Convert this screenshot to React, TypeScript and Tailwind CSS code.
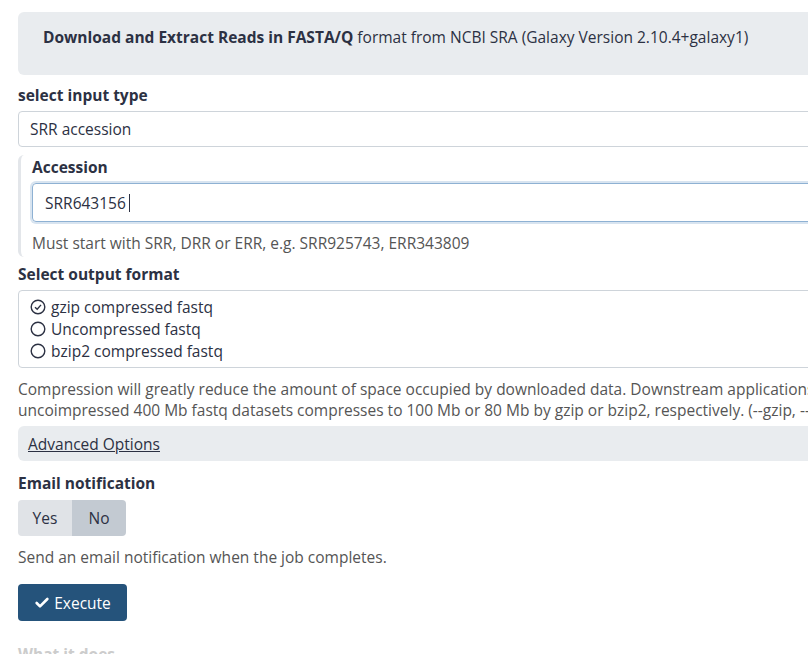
import { Check } from 'lucide-react';

const formats = [
  { label: 'gzip compressed fastq', checked: true },
  { label: 'Uncompressed fastq', checked: false },
  { label: 'bzip2 compressed fastq', checked: false },
];

function RadioIcon({ checked }: { checked: boolean }) {
  return (
    <svg width="16" height="16" viewBox="0 0 16 16" className="shrink-0">
      <circle cx="8" cy="8" r="6.8" fill="none" stroke="#2c3143" strokeWidth="1.4" />
      {checked && (
        <path d="M5 8.2 L7.2 10.3 L11 5.9" fill="none" stroke="#2c3143" strokeWidth="1.4" />
      )}
    </svg>
  );
}

export default function App() {
  return (
    <div className="w-full overflow-hidden bg-white font-['Open_Sans',sans-serif] text-[15.5px] leading-[22px] text-[#2c3143]">
      <div className="w-[1100px] pl-[18px] pt-[12px]">
        <div className="h-[63px] rounded-md bg-[#e9ecef] px-[25px] pt-[14px]">
          <span className="font-bold">Download and Extract Reads in FASTA/Q</span> format from NCBI SRA (Galaxy
          Version 2.10.4+galaxy1)
        </div>

        <div className="mt-[8px] font-bold leading-[24px]">select input type</div>
        <div className="mt-[4px] flex h-[36px] items-center rounded border border-[#ced4da] px-[11px]">
          SRR accession
        </div>

        <div className="mt-[8px] rounded-l-md border-l-[3px] border-[#e3e6ea] pb-[3px] pl-[11px]">
          <div className="font-bold leading-[24px]">Accession</div>
          <div className="mt-[4px] flex h-[39px] items-center rounded border border-[#8eb1d3] px-[12px] shadow-[0_0_0_2px_rgba(142,177,211,0.35)]">
            SRR643156
            <span className="ml-[3px] inline-block h-[18px] w-px bg-[#2c3143]" />
          </div>
          <div className="mt-[10px] text-[#555]">Must start with SRR, DRR or ERR, e.g. SRR925743, ERR343809</div>
        </div>

        <div className="mt-[5px] font-bold leading-[24px]">Select output format</div>
        <div className="mt-[4px] h-[78px] rounded border border-[#ced4da] px-[11px] pt-[5px]">
          {formats.map((f) => (
            <div key={f.label} className="flex h-[22px] items-center gap-[5px]">
              <RadioIcon checked={f.checked} />
              {f.label}
            </div>
          ))}
        </div>

        <div className="mt-[11px] leading-[21px] text-[#555]">
          Compression will greatly reduce the amount of space occupied by downloaded data. Downstream applications may
          take longer to start.
          <br />
          uncoimpressed 400 Mb fastq datasets compresses to 100 Mb or 80 Mb by gzip or bzip2, respectively. (--gzip,
          --bzip2)
        </div>

        <div className="mt-[5px] flex h-[35px] items-center rounded-md bg-[#e9ecef] px-[10px]">
          <span className="underline">Advanced Options</span>
        </div>

        <div className="mt-[10px] font-bold leading-[24px]">Email notification</div>
        <div className="mt-[5px] flex h-[36px] w-[108px] overflow-hidden rounded">
          <div className="flex w-[54px] items-center justify-center bg-[#e0e3e7]">Yes</div>
          <div className="flex w-[54px] items-center justify-center bg-[#c3cad2]">No</div>
        </div>
        <div className="mt-[10px] text-[#555]">Send an email notification when the job completes.</div>

        <button className="mt-[16px] flex h-[37px] w-[109px] items-center justify-center gap-[4px] rounded bg-[#25537b] text-white">
          <Check size={16} strokeWidth={4} />
          Execute
        </button>

        <div className="mt-[22px] font-bold text-[#ccc]">What it does</div>
      </div>
    </div>
  );
}
